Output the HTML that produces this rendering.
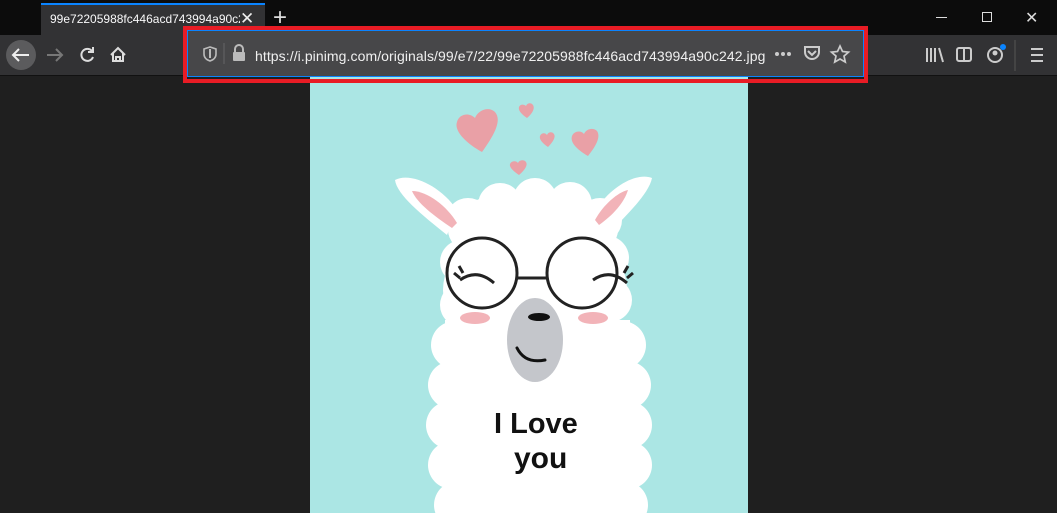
<!DOCTYPE html>
<html><head><meta charset="utf-8"><style>
*{margin:0;padding:0;box-sizing:border-box}
body{width:1057px;height:513px;overflow:hidden;background:#1f1f1f;font-family:"Liberation Sans",sans-serif;position:relative}
.abs{position:absolute}
</style></head><body>
<div class="abs" style="left:0;top:0;width:1057px;height:35px;background:#0c0c0c"></div>
<div class="abs" style="left:41px;top:3px;width:224px;height:32px;background:#323234;border-top:2px solid #0a84ff"></div>
<div class="abs" style="left:50px;top:12px;width:190px;height:16px;color:#f9f9fa;font-size:12px;white-space:nowrap;overflow:hidden">99e72205988fc446acd743994a90c24</div>
<div class="abs" style="left:240px;top:9px;color:#eee;font-size:17px">✕</div>
<div class="abs" style="left:273px;top:4px;color:#ddd;font-size:24px;font-weight:300">+</div>
<div class="abs" style="left:936px;top:17px;width:11px;height:1px;background:#ddd"></div>
<div class="abs" style="left:982px;top:12px;width:10px;height:10px;border:1px solid #ddd"></div>
<div class="abs" style="left:1025px;top:8px;color:#ddd;font-size:16px">✕</div>
<div class="abs" style="left:0;top:35px;width:1057px;height:41px;background:#323234;border-bottom:1px solid #111"></div>
<svg class="abs" style="left:0;top:35px" width="1057" height="41">
<circle cx="21" cy="20" r="15" fill="#5b5b5d"/>
<path d="M29 20H13M19 14l-6 6 6 6" stroke="#eee" stroke-width="2" fill="none"/>
<path d="M62 20H47M56 14l6 6-6 6" stroke="#777" stroke-width="2" fill="none"/>
<path d="M92 16a6 6 0 1 0 1 6M93 12v5h-5" stroke="#ddd" stroke-width="2" fill="none"/>
<path d="M111 20l7-7 7 7M113 18v8h10v-8M116 26v-4h4v4" stroke="#ddd" stroke-width="2" fill="none"/>
<path d="M927 13v14M931 13v14M935 13v14M939 13l4 14" stroke="#ccc" stroke-width="2"/>
<rect x="957" y="13" width="14" height="13" rx="2" stroke="#ccc" stroke-width="2" fill="none"/><path d="M964 13v13" stroke="#ccc" stroke-width="2"/>
<circle cx="995" cy="20" r="7" stroke="#ccc" stroke-width="2" fill="none"/><circle cx="995" cy="18" r="2.5" fill="#ccc"/>
<circle cx="1003" cy="12" r="3" fill="#0a84ff"/>
<path d="M1015 5v31" stroke="#555"/>
<path d="M1031 14h12M1031 20h12M1031 26h12" stroke="#ccc" stroke-width="2"/>
</svg>
<div class="abs" style="left:310px;top:76px;width:438px;height:437px;background:#abe6e4"></div>
<svg class="abs" style="left:0;top:0" width="1057" height="513">
<g fill="#e9a0a6">
<path d="M482 152c-18-10-28-22-25-30 2-8 12-10 18-4 3-8 14-12 20-6 7 8 0 22-13 40z"/>
<path d="M527 118c-6-4-9-8-8-11 1-3 5-3 7-1 1-3 5-4 7-1 2 3 0 8-6 13z"/>
<path d="M548 147c-6-4-9-8-8-11 1-3 5-4 7-1 1-3 5-4 7-1 2 3-1 8-6 13z"/>
<path d="M588 156c-12-7-18-14-16-20 2-5 9-6 12-2 2-5 9-7 13-3 4 6-1 15-9 25z"/>
<path d="M519 175c-6-4-10-8-9-11 1-3 6-4 8-1 1-3 6-4 8-1 2 3-1 8-7 13z"/>
</g>
<g fill="#fff">
<path d="M395 180c15-8 45 5 62 30l-10 25c-25-20-50-40-52-55z"/>
<path d="M652 178c-15-6-40 8-55 30l12 25c20-20 40-40 43-55z"/>
<ellipse cx="533" cy="230" rx="85" ry="40"/>
<ellipse cx="535" cy="290" rx="92" ry="70"/>
<circle cx="468" cy="220" r="22"/><circle cx="500" cy="205" r="22"/><circle cx="535" cy="200" r="22"/><circle cx="570" cy="204" r="22"/><circle cx="600" cy="220" r="22"/>
<circle cx="462" cy="262" r="22"/><circle cx="607" cy="258" r="22"/><circle cx="462" cy="305" r="22"/><circle cx="610" cy="300" r="22"/>
<rect x="445" y="320" width="185" height="193"/>
<circle cx="455" cy="345" r="24"/><circle cx="622" cy="345" r="24"/><circle cx="452" cy="385" r="24"/><circle cx="627" cy="385" r="24"/><circle cx="450" cy="425" r="24"/><circle cx="628" cy="425" r="24"/><circle cx="452" cy="465" r="24"/><circle cx="628" cy="465" r="24"/><circle cx="458" cy="505" r="24"/><circle cx="624" cy="505" r="24"/>
</g>
<g fill="#f2b3b8">
<path d="M412 191c15 0 35 15 45 32l-5 5c-18-12-35-25-40-37z"/>
<path d="M628 190c-10 2-25 15-33 30l4 5c14-10 25-22 29-35z"/>
<ellipse cx="475" cy="318" rx="15" ry="6"/><ellipse cx="593" cy="318" rx="15" ry="6"/>
</g>
<g stroke="#222" stroke-width="3" fill="none">
<circle cx="482" cy="273" r="35"/><circle cx="582" cy="273" r="35"/><path d="M517 278h30"/>
<path d="M460 280q17-12 34 3M460 278l-6-5M463 273l-4-7M593 280q17-12 34 3M627 278l6-5M624 273l4-7"/>
</g>
<ellipse cx="535" cy="340" rx="28" ry="42" fill="#c4c6cb"/>
<ellipse cx="539" cy="317" rx="11" ry="4" fill="#111"/>
<path d="M517 348q8 16 28 12" stroke="#111" stroke-width="3" fill="none" stroke-linecap="round"/>
<text x="494" y="433" font-family="Liberation Sans" font-weight="bold" font-size="29" fill="#111">I Love</text>
<text x="514" y="468" font-family="Liberation Sans" font-weight="bold" font-size="30" fill="#111">you</text>
</svg>
<div class="abs" style="left:183px;top:26px;width:685px;height:57px;border:4px solid #e81c25"></div>
<div class="abs" style="left:187px;top:30px;width:677px;height:47px;background:#474749;border:1px solid #0a84ff"></div>
<svg class="abs" style="left:187px;top:30px" width="677" height="47">
<path d="M17 19l6-2 6 2v5c0 4-3 6-6 7-3-1-6-3-6-7z" stroke="#bbb" stroke-width="1.6" fill="none"/><path d="M23 19v9" stroke="#bbb" stroke-width="2"/>
<path d="M37 13v21" stroke="#666"/>
<rect x="46" y="22" width="12" height="9" rx="1" fill="#bbb"/><path d="M48 22v-3a4 4 0 0 1 8 0v3" stroke="#bbb" stroke-width="2" fill="none"/>
<circle cx="590" cy="24" r="2" fill="#ccc"/><circle cx="596" cy="24" r="2" fill="#ccc"/><circle cx="602" cy="24" r="2" fill="#ccc"/>
<path d="M618 17h14v5a7 7 0 0 1-14 0z" stroke="#ccc" stroke-width="2" fill="none"/><path d="M621 21l4 4 4-4" stroke="#ccc" stroke-width="2" fill="none"/>
<path d="M653 16l2.5 5.5 6 .6-4.5 4 1.3 6-5.3-3.1-5.3 3.1 1.3-6-4.5-4 6-.6z" stroke="#ccc" stroke-width="1.7" fill="none"/>
</svg>
<div class="abs" style="left:255px;top:48px;color:#f0f0f0;font-size:14px;letter-spacing:0.08px;white-space:nowrap">https://i.pinimg.com/originals/99/e7/22/99e72205988fc446acd743994a90c242.jpg</div>
</body></html>
